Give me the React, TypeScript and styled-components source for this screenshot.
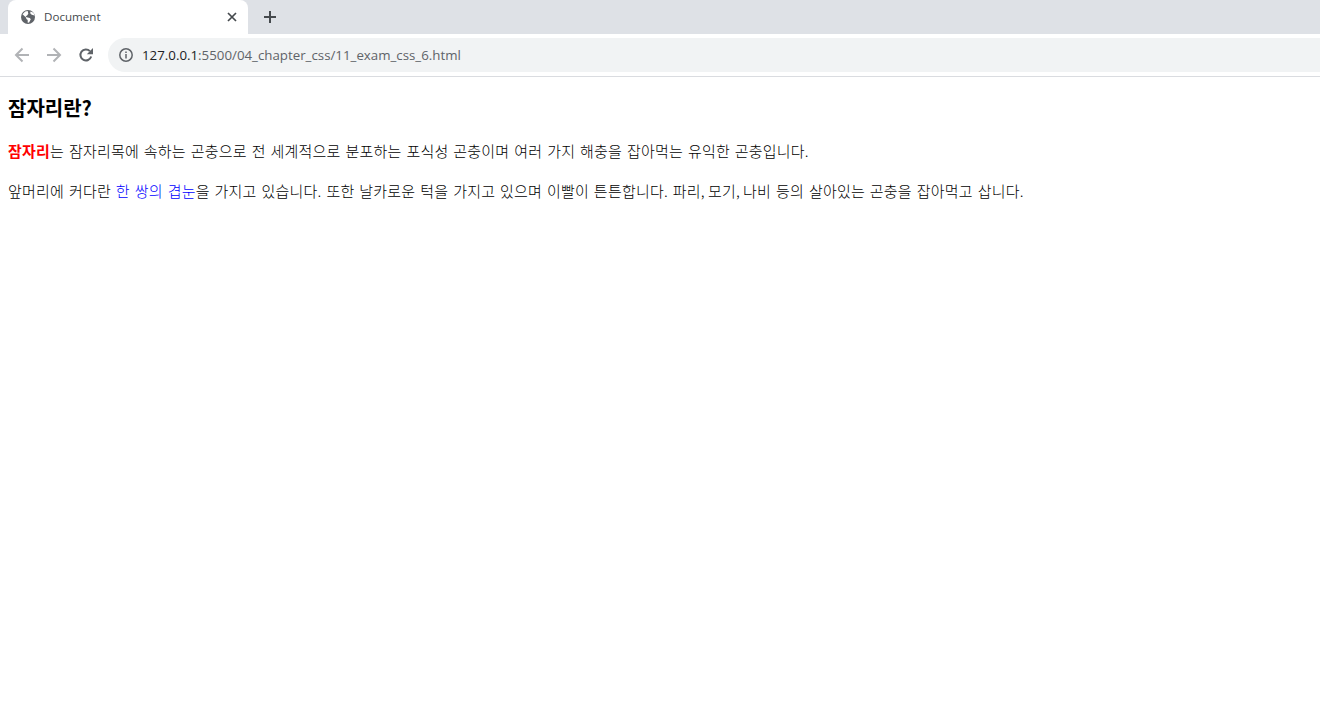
import React from "react";
import styled, { createGlobalStyle } from "styled-components";

const GlobalStyle = createGlobalStyle`
  html, body {
    margin: 0;
    background: #fff;
  }
  body {
    width: 1320px;
    height: 716px;
    overflow: hidden;
  }
`;

const Browser = styled.div`
  display: flex;
  flex-direction: column;
  height: 716px;
`;

const TabStrip = styled.div`
  display: flex;
  align-items: flex-end;
  height: 34px;
  padding-left: 8px;
  background: #dee1e6;
`;

const Tab = styled.div`
  display: flex;
  align-items: center;
  width: 240px;
  height: 34px;
  box-sizing: border-box;
  padding: 0 8px 1px 12px;
  background: #fff;
  border-radius: 8px 8px 0 0;
`;

const TabTitle = styled.span`
  flex: 1;
  margin-left: 8px;
  font: 11.6px "Open Sans", "Liberation Sans", sans-serif;
  color: #45494d;
`;

const IconButton = styled.button<{ $size: number; $left?: number; $bottom?: number }>`
  display: flex;
  align-items: center;
  justify-content: center;
  width: ${(p) => p.$size}px;
  height: ${(p) => p.$size}px;
  margin-left: ${(p) => p.$left ?? 0}px;
  margin-bottom: ${(p) => p.$bottom ?? 0}px;
  padding: 0;
  border: 0;
  background: none;
`;

const Toolbar = styled.div`
  display: flex;
  align-items: center;
  height: 43px;
  padding: 0 0 1px 6px;
  background: #fff;
  border-bottom: 1px solid #dadce0;
  box-sizing: border-box;
`;

const Omnibox = styled.div`
  display: flex;
  align-items: center;
  flex: 1;
  height: 34px;
  margin-left: 6px;
  padding-left: 10px;
  background: #f1f3f4;
  border-radius: 17px 0 0 17px;
`;

const Url = styled.span`
  margin-left: 8px;
  font: 13.3px "Open Sans", "Liberation Sans", sans-serif;
  color: #5f6368;
`;

const Host = styled.span`
  color: #202124;
`;

const Page = styled.main`
  flex: 1;
  padding: 8px;
  color: #000;
  font-family: "Noto Sans CJK KR", "Noto Sans", sans-serif;
`;

const Title = styled.h1`
  margin: 10px 0 0;
  font-size: 20px;
  line-height: 26px;
  font-weight: 700;
`;

const Paragraph = styled.p`
  margin: 0;
  padding-top: 19px;
  font-size: 15px;
  font-weight: 300;
  line-height: 21px;
  letter-spacing: 0.2px;
  word-spacing: 1.4px;
`;

const Strong = styled.strong`
  color: #ff0000;
  font-weight: 700;
`;

const Blue = styled.span`
  color: #0000ff;
`;

/* the comma of the original font is narrower than this one */
const Comma = styled.span`
  letter-spacing: -1.5px;
`;

export default function App() {
  return (
    <>
      <GlobalStyle />
      <Browser>
        <TabStrip>
          <Tab>
            <svg width="16" height="16" viewBox="0 0 16 16">
              <circle cx="8" cy="8" r="7" fill="#5f6368" />
              <path
                d="M2.5 5.2 6 8.6l.4 1.3 1.3 1v2.8l1.4-.2 1.7-3.2-1-1.4-3.2-.6-1-1 1.5-.9 1.2-1.7-.6-2.6-2.5.3zM10.5 2.6l-.3 1.6 1.5 1.6 2.8.6-1-2.6z"
                fill="#fff"
              />
            </svg>
            <TabTitle>Document</TabTitle>
            <IconButton $size={16}>
              <svg width="16" height="16" viewBox="0 0 16 16">
                <path d="M4 4l8 8M12 4l-8 8" stroke="#45494d" strokeWidth="1.7" />
              </svg>
            </IconButton>
          </Tab>
          <IconButton $size={16} $left={14} $bottom={9}>
            <svg width="16" height="16" viewBox="0 0 16 16">
              <path d="M8 2v12M2 8h12" stroke="#45494d" strokeWidth="2" />
            </svg>
          </IconButton>
        </TabStrip>
        <Toolbar>
          <IconButton $size={32}>
            <svg width="16" height="16" viewBox="0 0 16 16">
              <path d="M15 8H2.5M8.5 1.5 2 8l6.5 6.5" fill="none" stroke="#b1b3b6" strokeWidth="2" />
            </svg>
          </IconButton>
          <IconButton $size={32}>
            <svg width="16" height="16" viewBox="0 0 16 16">
              <path d="M1 8h12.5M7.5 1.5 14 8l-6.5 6.5" fill="none" stroke="#b1b3b6" strokeWidth="2" />
            </svg>
          </IconButton>
          <IconButton $size={32}>
            <svg width="16" height="16" viewBox="0 0 16 16">
              <path d="M13.2 9.5a5.5 5.5 0 1 1-1.3-5.4" fill="none" stroke="#5f6368" strokeWidth="2" />
              <path d="M15 1v6.2H8.8z" fill="#5f6368" />
            </svg>
          </IconButton>
          <Omnibox>
            <svg width="16" height="16" viewBox="0 0 16 16">
              <circle cx="8" cy="8" r="6.2" fill="none" stroke="#5f6368" strokeWidth="1.5" />
              <path d="M8 7v4.4M8 4.4v1.5" stroke="#5f6368" strokeWidth="1.5" />
            </svg>
            <Url>
              <Host>127.0.0.1</Host>:5500/04_chapter_css/11_exam_css_6.html
            </Url>
          </Omnibox>
        </Toolbar>
        <Page>
          <Title>잠자리란?</Title>
          <Paragraph>
            <Strong>잠자리</Strong>는 잠자리목에 속하는 곤충으로 전 세계적으로 분포하는 포식성 곤충이며 여러 가지 해충을 잡아먹는 유익한 곤충입니다.
          </Paragraph>
          <Paragraph>
            앞머리에 커다란 <Blue>한 쌍의 겹눈</Blue>을 가지고 있습니다. 또한 날카로운 턱을 가지고 있으며 이빨이 튼튼합니다. 파리<Comma>,</Comma> 모기<Comma>,</Comma> 나비 등의 살아있는 곤충을 잡아먹고 삽니다.
          </Paragraph>
        </Page>
      </Browser>
    </>
  );
}
